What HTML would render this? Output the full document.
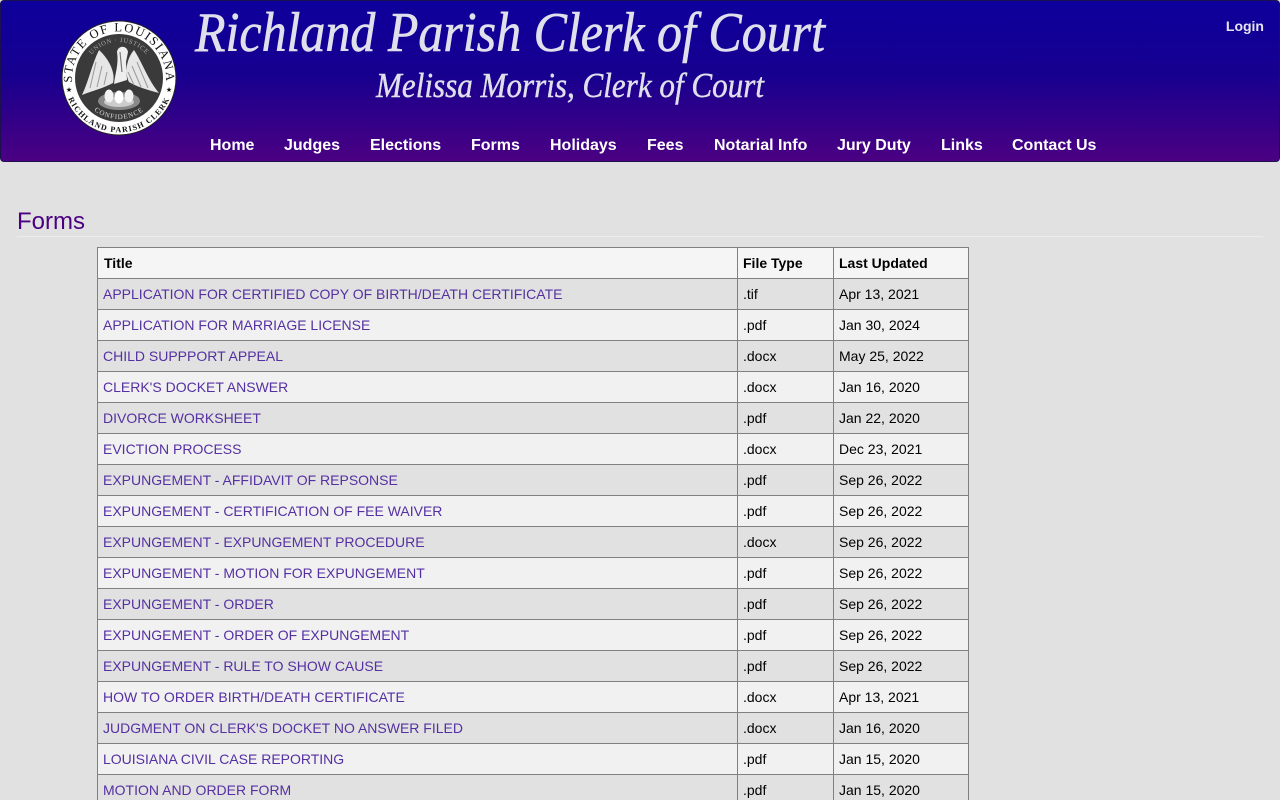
<!DOCTYPE html>
<html lang="en">
<head>
<meta charset="utf-8">
<title>Forms - Richland Parish Clerk of Court</title>
<style>
html,body{margin:0;padding:0;background:#e1e1e1;width:1280px;height:800px;overflow:hidden;font-family:"Liberation Sans",Arial,sans-serif}
#page{position:absolute;left:0;top:0;width:1280px;height:800px;overflow:hidden;background:#e1e1e1}
#hdr{position:absolute;left:0;top:0;width:1278px;height:160px;border:1px solid #1c1050;border-radius:4px;background:linear-gradient(#0e009c 0%,#16008f 45%,#4b0082 100%)}
#art{position:absolute;left:0;top:0}
.nav{position:absolute;top:137px;font-size:16px;line-height:18px;font-weight:bold;color:#fff;white-space:nowrap}
#login{position:absolute;top:18px;right:16px;font-size:14px;line-height:17px;font-weight:bold;color:#e6e6ee}
h1{position:absolute;left:17px;top:208px;margin:0;font-size:24px;line-height:28px;font-weight:normal;color:#4b0082}
#rule{position:absolute;left:17px;top:236px;width:1246px;height:1px;background:#ececec}
table{position:absolute;left:97px;top:247px;width:871px;border-collapse:collapse;table-layout:fixed;font-size:14px;color:#000}
td,th{border:1px solid #808080;height:30px;padding:0 0 0 5px;text-align:left;white-space:nowrap;line-height:16px;box-sizing:border-box}
tr{height:31px}
th{background:#f5f5f5;font-weight:bold;padding-left:5px}
th:first-child{padding-left:6px}
th.f{padding-left:5px}
tr:nth-child(even) td{background:#e1e1e1}
tr:nth-child(odd) td{background:#f1f1f1}
td.t{padding-left:5px}
a{color:#5530a2;text-decoration:none}
</style>
</head>
<body>
<div id="page">
<div id="hdr"></div>
<svg id="art" width="840" height="162" viewBox="0 0 840 162">
<defs>
<path id="topArc" d="M73 88a47 47 0 1 1 92 0"/>
<path id="botArc" d="M66 92a55 55 0 0 0 106 0"/>
<path id="inTop" d="M83 78a36 36 0 0 1 72 0"/>
<path id="inBot" d="M78 78a41 41 0 0 0 82 0"/>
</defs>
<text x="195" y="51" font-family="'Liberation Serif',serif" font-style="italic" font-size="56" fill="#e0e0ec" stroke="#e0e0ec" stroke-width=".6" textLength="630" lengthAdjust="spacingAndGlyphs">Richland Parish Clerk of Court</text>
<text x="376" y="97" font-family="'Liberation Serif',serif" font-style="italic" font-size="35" fill="#e0e0ec" stroke="#e0e0ec" stroke-width=".4" textLength="388" lengthAdjust="spacingAndGlyphs">Melissa Morris, Clerk of Court</text>
<circle cx="119" cy="78" r="57.5" fill="#222"/>
<circle cx="119" cy="78" r="56.5" fill="#fff"/>
<circle cx="119" cy="78" r="44" fill="#3a3a3a"/>
<text font-family="'Liberation Serif',serif" font-size="12.5" fill="#111"><textPath href="#topArc" startOffset="50%" text-anchor="middle" letter-spacing="1.6">STATE OF LOUISIANA</textPath></text>
<text font-family="'Liberation Serif',serif" font-size="8" font-weight="bold" fill="#111"><textPath href="#botArc" startOffset="50%" text-anchor="middle" letter-spacing="1.1">RICHLAND PARISH CLERK</textPath></text>
<text x="69" y="92" font-family="'DejaVu Sans',sans-serif" font-size="7" fill="#111" text-anchor="middle">★</text>
<text x="169" y="92" font-family="'DejaVu Sans',sans-serif" font-size="7" fill="#111" text-anchor="middle">★</text>
<text font-family="'Liberation Serif',serif" font-size="6.5" fill="#aaa"><textPath href="#inTop" startOffset="50%" text-anchor="middle" letter-spacing=".7">UNION · JUSTICE</textPath></text>
<text font-family="'Liberation Serif',serif" font-size="7" fill="#ddd"><textPath href="#inBot" startOffset="50%" text-anchor="middle" letter-spacing=".9">CONFIDENCE</textPath></text>
<path d="M99 50C92 64 89 80 82 95C92 91 104 88 113 83C116 72 108 58 99 50Z" fill="#e6e6e6"/>
<path d="M134 50C142 62 148 80 159 93C148 90 137 87 129 82C124 72 127 58 134 50Z" fill="#e6e6e6"/>
<path d="M96 62L90 88M102 66L97 87M107 72L104 85M137 62L148 88M132 66L141 87M128 72L134 85" stroke="#999" stroke-width="1" fill="none"/>
<path d="M117 52C118 45 127 45 128 52L126 62L127 80L114 84C115 74 119 64 117 52Z" fill="#eee"/>
<path d="M120 52L122 72" stroke="#777" stroke-width="1.2"/>
<ellipse cx="119" cy="101" rx="21" ry="9" fill="#8a8a8a"/>
<ellipse cx="119" cy="102" rx="15" ry="5" fill="#ccc"/>
<ellipse cx="109" cy="96" rx="4.5" ry="6.5" fill="#f2f2f2"/>
<ellipse cx="119" cy="97" rx="4.5" ry="6.5" fill="#fff"/>
<ellipse cx="129" cy="96" rx="4.5" ry="6.5" fill="#f2f2f2"/>
</svg>
<span class="nav" style="left:210px">Home</span>
<span class="nav" style="left:284px">Judges</span>
<span class="nav" style="left:370px">Elections</span>
<span class="nav" style="left:471px">Forms</span>
<span class="nav" style="left:550px">Holidays</span>
<span class="nav" style="left:647px">Fees</span>
<span class="nav" style="left:714px">Notarial Info</span>
<span class="nav" style="left:837px">Jury Duty</span>
<span class="nav" style="left:941px">Links</span>
<span class="nav" style="left:1012px">Contact Us</span>
<a id="login" href="#">Login</a>
<h1>Forms</h1>
<div id="rule"></div>
<table>
<colgroup><col style="width:640px"><col style="width:96px"><col style="width:135px"></colgroup>
<tr><th>Title</th><th class="f">File Type</th><th>Last Updated</th></tr>
<tr><td><a href="#">APPLICATION FOR CERTIFIED COPY OF BIRTH/DEATH CERTIFICATE</a></td><td class="t">.tif</td><td>Apr 13, 2021</td></tr>
<tr><td><a href="#">APPLICATION FOR MARRIAGE LICENSE</a></td><td class="t">.pdf</td><td>Jan 30, 2024</td></tr>
<tr><td><a href="#">CHILD SUPPPORT APPEAL</a></td><td class="t">.docx</td><td>May 25, 2022</td></tr>
<tr><td><a href="#">CLERK'S DOCKET ANSWER</a></td><td class="t">.docx</td><td>Jan 16, 2020</td></tr>
<tr><td><a href="#">DIVORCE WORKSHEET</a></td><td class="t">.pdf</td><td>Jan 22, 2020</td></tr>
<tr><td><a href="#">EVICTION PROCESS</a></td><td class="t">.docx</td><td>Dec 23, 2021</td></tr>
<tr><td><a href="#">EXPUNGEMENT - AFFIDAVIT OF REPSONSE</a></td><td class="t">.pdf</td><td>Sep 26, 2022</td></tr>
<tr><td><a href="#">EXPUNGEMENT - CERTIFICATION OF FEE WAIVER</a></td><td class="t">.pdf</td><td>Sep 26, 2022</td></tr>
<tr><td><a href="#">EXPUNGEMENT - EXPUNGEMENT PROCEDURE</a></td><td class="t">.docx</td><td>Sep 26, 2022</td></tr>
<tr><td><a href="#">EXPUNGEMENT - MOTION FOR EXPUNGEMENT</a></td><td class="t">.pdf</td><td>Sep 26, 2022</td></tr>
<tr><td><a href="#">EXPUNGEMENT - ORDER</a></td><td class="t">.pdf</td><td>Sep 26, 2022</td></tr>
<tr><td><a href="#">EXPUNGEMENT - ORDER OF EXPUNGEMENT</a></td><td class="t">.pdf</td><td>Sep 26, 2022</td></tr>
<tr><td><a href="#">EXPUNGEMENT - RULE TO SHOW CAUSE</a></td><td class="t">.pdf</td><td>Sep 26, 2022</td></tr>
<tr><td><a href="#">HOW TO ORDER BIRTH/DEATH CERTIFICATE</a></td><td class="t">.docx</td><td>Apr 13, 2021</td></tr>
<tr><td><a href="#">JUDGMENT ON CLERK'S DOCKET NO ANSWER FILED</a></td><td class="t">.docx</td><td>Jan 16, 2020</td></tr>
<tr><td><a href="#">LOUISIANA CIVIL CASE REPORTING</a></td><td class="t">.pdf</td><td>Jan 15, 2020</td></tr>
<tr><td><a href="#">MOTION AND ORDER FORM</a></td><td class="t">.pdf</td><td>Jan 15, 2020</td></tr>
</table>
</div>
</body>
</html>
